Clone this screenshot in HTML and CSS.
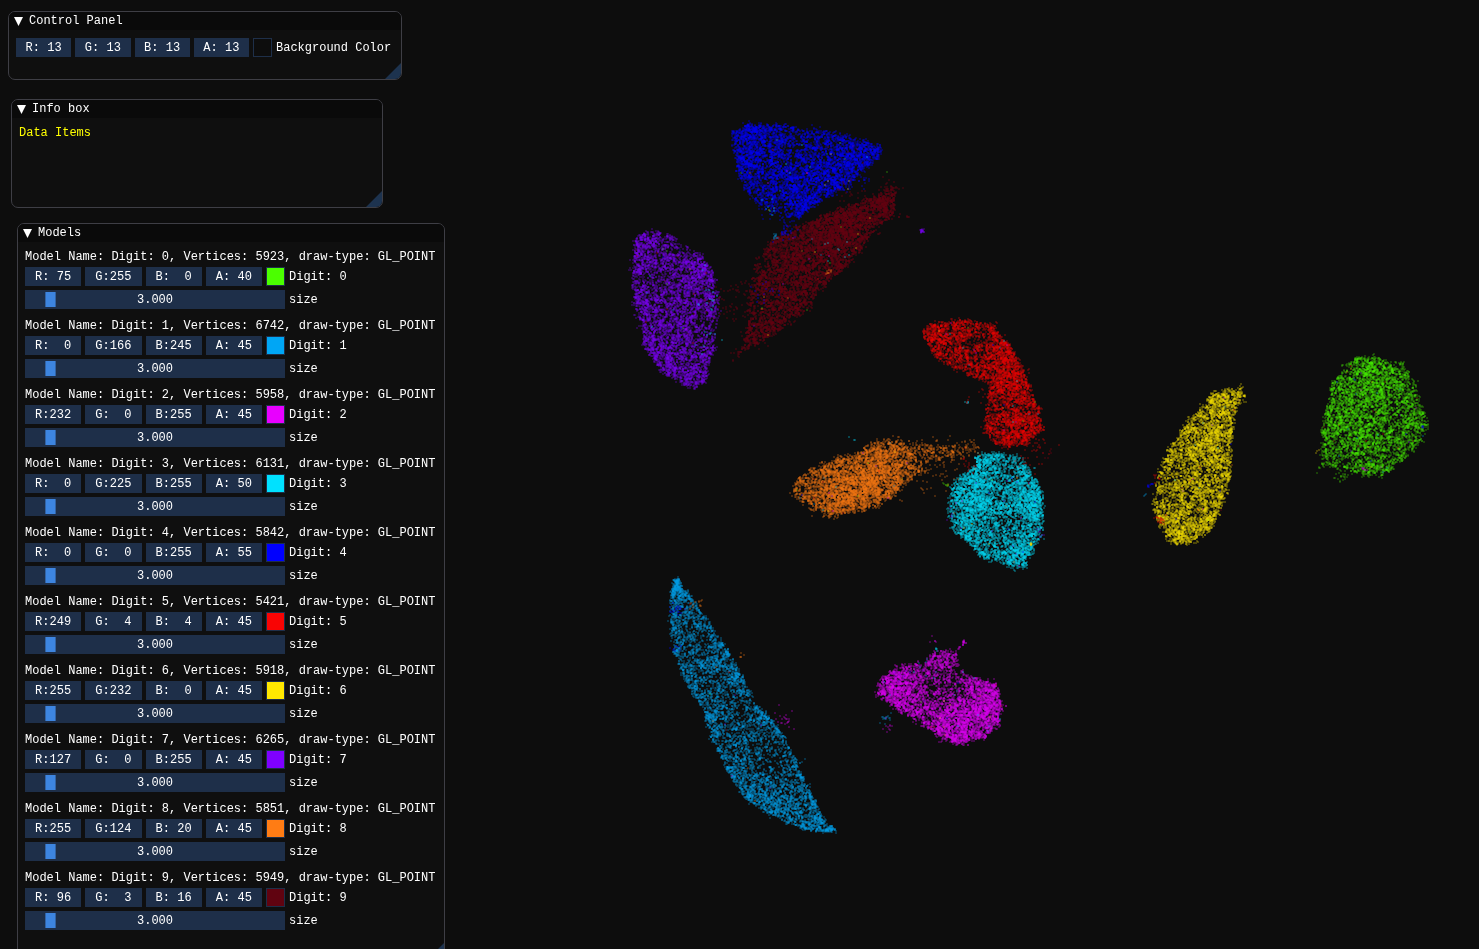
FILE: index.html
```html
<!DOCTYPE html>
<html lang="en">
<head>
<meta charset="utf-8">
<title>Digit point clouds</title>
<link rel="stylesheet" href="styles.css">
</head>
<body>
<main class="desktop">
  <canvas class="scene" aria-label="Point clouds of ten digit classes"></canvas>

  <section class="window window-control">
    <header class="titlebar">
      <button class="collapse" aria-label="Collapse Control Panel"><svg viewBox="0 0 9 9"><path d="M0 0H9L4.5 9Z"/></svg></button>
      <h2 class="title">Control Panel</h2>
    </header>
    <div class="content">
      <div class="row">
        <div class="channels">
          <input class="field" aria-label="Red" value="R: 13">
          <input class="field" aria-label="Green" value="G: 13">
          <input class="field" aria-label="Blue" value="B: 13">
          <input class="field" aria-label="Alpha" value="A: 13">
          <input class="swatch" type="color" id="background" value="#0d0d0d">
        </div>
        <label class="label" for="background">Background Color</label>
      </div>
    </div>
    <span class="grip"></span>
  </section>

  <section class="window window-info">
    <header class="titlebar">
      <button class="collapse" aria-label="Collapse Info box"><svg viewBox="0 0 9 9"><path d="M0 0H9L4.5 9Z"/></svg></button>
      <h2 class="title">Info box</h2>
    </header>
    <div class="content">
      <p class="line accent">Data Items</p>
    </div>
    <span class="grip"></span>
  </section>

  <section class="window window-models">
    <header class="titlebar">
      <button class="collapse" aria-label="Collapse Models"><svg viewBox="0 0 9 9"><path d="M0 0H9L4.5 9Z"/></svg></button>
      <h2 class="title">Models</h2>
    </header>
    <div class="content models"></div>
    <span class="grip"></span>
  </section>
</main>
<script src="app.js"></script>
</body>
</html>
```
FILE: styles.css
```css
:root {
  --bg: #0d0d0d;
  --window: #0f0f0f;
  --title: #0a0a0a;
  --border: #3e3e45;
  --frame: #1e2f49;
  --grab: #3d85e0;
  --gap: 4px;
}

* {
  box-sizing: border-box;
}

body {
  margin: 0;
  background: var(--bg);
  color: #fff;
  font: 12px/15px "Liberation Mono", "DejaVu Sans Mono", monospace;
}

.desktop {
  position: relative;
  height: 100vh;
  overflow: hidden;
}

.scene {
  display: block;
}

.window {
  position: absolute;
  border: 1px solid var(--border);
  border-radius: 7px;
  background: var(--window);
  overflow: hidden;
}

.window-control {
  left: 8px;
  top: 11px;
  width: 394px;
  min-height: 69px;
  --item-width: 256px;
}

.window-info {
  left: 11px;
  top: 99px;
  width: 372px;
  min-height: 109px;
}

.window-models {
  left: 17px;
  top: 223px;
  width: 428px;
  min-height: 737px;
  --item-width: 260px;
}

.titlebar {
  display: flex;
  align-items: center;
  gap: 6px;
  height: 18px;
  padding: 0 5px;
  background: var(--title);
}

.collapse {
  display: flex;
  padding: 0;
  border: 0;
  background: none;
}

.collapse svg {
  width: 9px;
  height: 9px;
  fill: #fff;
}

.title {
  margin: 0;
  padding-top: 1px;
  font: inherit;
}

.content {
  padding: 8px 7px;
}

.line {
  margin: 0;
  white-space: nowrap;
}

.accent {
  color: #ff0;
}

.models {
  display: grid;
  gap: 10px;
}

.model {
  display: grid;
  gap: var(--gap);
}

.model .line {
  height: 13px;
}

.row {
  display: flex;
  align-items: center;
  gap: var(--gap);
  white-space: nowrap;
}

.label,
.value {
  padding-top: 2px;
}

.channels {
  display: grid;
  grid-template-columns: repeat(4, 1fr) 19px;
  gap: var(--gap);
  width: var(--item-width);
}

.field {
  width: 100%;
  min-width: 0;
  height: 19px;
  padding: 1px 0 0;
  border: 0;
  background: var(--frame);
  color: inherit;
  font: inherit;
  text-align: center;
}

.swatch {
  appearance: none;
  width: 19px;
  height: 19px;
  padding: 0;
  border: 1px solid var(--frame);
  background: none;
}

.swatch::-webkit-color-swatch-wrapper {
  padding: 0;
}

.swatch::-webkit-color-swatch {
  border: 0;
  border-radius: 0;
}

.slider {
  display: grid;
  width: var(--item-width);
  height: 19px;
}

.slider > * {
  grid-area: 1 / 1;
}

.range {
  appearance: none;
  width: 100%;
  height: 19px;
  margin: 0;
  padding: 0 2px;
  background: var(--frame);
}

.range::-webkit-slider-thumb {
  appearance: none;
  width: 11px;
  height: 15px;
  border: 1px solid #3263a4;
  border-width: 0 1px;
  background: var(--grab);
}

.value {
  place-self: center;
  z-index: 1;
  pointer-events: none;
}

.grip {
  position: absolute;
  right: 0;
  bottom: 0;
  width: 16px;
  height: 16px;
  background: #1d334f;
  clip-path: polygon(100% 0, 100% 100%, 0 100%);
}
```
FILE: app.js
```js
const models = [
  { vertices: 5923, rgba: [75, 255, 0, 40], rough: 0.8, rim: 0.04,
    outline: [1357,357,1380,358,1403,365,1415,380,1418,397,1427,420,1423,440,1403,460,1387,472,1367,477,1350,470,1322,465,1322,427,1330,400,1332,383,1343,370],
    dense: [[1368,370,18],[1385,388,14],[1342,415,20]], sparse: [[1342,464,10]] },
  { vertices: 6742, rgba: [0, 166, 245, 45], rough: 0.5, rim: 0.16,
    outline: [677,577,682,590,692,598,703,614,720,640,734,663,746,685,757,706,772,722,785,738,795,760,803,780,815,802,827,826,837,831,813,831,793,825,754,805,742,793,732,778,720,755,711,733,702,706,689,687,681,668,674,648,670,620,671,597],
    dense: [[677,587,8],[735,675,10],[775,800,20],[762,715,10],[818,824,12]], sparse: [[698,640,14],[742,715,16],[765,750,18],[776,768,14]] },
  { vertices: 5958, rgba: [232, 0, 255, 45], rough: 1, rim: 0,
    outline: [877,693,880,680,898,667,927,663,933,653,953,650,962,670,983,680,997,685,1002,707,998,723,987,737,967,742,948,743,927,728,907,715,890,705],
    dense: [[895,690,18],[985,705,20],[958,725,20],[937,662,7]], sparse: [[940,685,22],[960,670,12]] },
  { vertices: 6131, rgba: [0, 225, 255, 50], rough: 1, rim: 0.05,
    outline: [977,455,997,453,1020,457,1030,470,1040,487,1043,510,1040,540,1027,557,1025,570,1010,565,983,557,970,543,953,530,948,503,957,480,973,470],
    dense: [[988,468,14],[1032,500,18],[980,500,18],[1020,555,12]], sparse: [[1007,470,14],[1004,525,14]] },
  { vertices: 5842, rgba: [0, 0, 255, 55], rough: 1, rim: 0.06,
    outline: [731,135,745,125,787,125,800,131,813,129,847,136,870,144,881,149,877,158,860,173,848,188,830,194,805,211,784,228,780,218,763,206,748,192,737,170,735,147],
    dense: [[760,135,18],[870,152,13],[842,175,16],[803,203,16],[745,165,12]], sparse: [[800,138,14],[775,208,18],[858,183,12],[785,222,14]] },
  { vertices: 5421, rgba: [249, 4, 4, 45], rough: 1, rim: 0.04,
    outline: [922,330,940,323,967,320,993,325,1010,347,1024,370,1030,390,1041,410,1040,430,1027,443,1007,448,993,443,983,427,987,407,989,382,960,370,937,357,927,340],
    dense: [[1003,350,16],[1012,380,16],[1018,435,16],[932,334,8]], sparse: [[980,345,14],[992,408,10]] },
  { vertices: 5918, rgba: [255, 232, 0, 45], rough: 0.8, rim: 0.04,
    outline: [1230,390,1242,387,1240,398,1237,407,1233,427,1230,450,1231,473,1223,500,1218,517,1207,533,1190,544,1172,543,1162,530,1153,507,1155,487,1165,457,1183,427,1203,407,1213,393],
    dense: [[1218,403,16],[1180,530,12],[1211,520,10],[1212,445,12]], sparse: [[1178,470,10],[1168,500,10]] },
  { vertices: 6265, rgba: [127, 0, 255, 45], rough: 1, rim: 0.05,
    outline: [634,243,642,233,653,230,670,235,683,245,703,260,712,270,718,293,715,327,715,347,707,367,707,382,690,388,663,373,647,350,638,320,634,277],
    dense: [[642,241,8],[700,268,14],[664,360,16],[640,300,10]], sparse: [[676,245,12],[655,285,12],[708,330,12]] },
  { vertices: 5851, rgba: [255, 124, 20, 45], rough: 1.7, rim: 0,
    outline: [792,493,797,480,817,467,853,455,870,445,890,440,913,445,923,443,953,450,980,447,953,457,927,464,910,480,887,500,857,511,830,516,810,508],
    dense: [[840,495,24],[885,465,20],[870,490,20]], sparse: [[800,484,10],[925,458,18],[965,450,18]] },
  { vertices: 5949, rgba: [104, 3, 18, 70], rough: 1.4, rim: 0,
    outline: [887,182,895,197,893,213,867,240,850,263,827,283,807,310,780,330,753,347,740,355,748,323,748,303,757,267,770,240,797,227,833,213,867,200,883,193],
    dense: [[885,205,14],[825,235,20],[850,225,18]], sparse: [[752,305,18],[762,265,12],[745,345,14]] },
];

// Opacity as entered in the panel, where it differs from the blend strength above.
const panelAlpha = { 9: 45 };

// Scattered samples of a class outside its own cloud: [x, y, class, count, spread]
const strays = [
  [922,231,7,24,1.2], [909,217,9,4,1], [887,172,0,1,0], [775,237,1,12,2], [768,205,3,8,5],
  [888,190,9,28,7], [735,300,9,60,14], [765,295,4,16,9], [785,232,4,30,7], [850,196,9,18,8],
  [768,205,4,30,8], [862,180,4,16,6],
  [710,300,3,14,8], [712,340,3,7,7], [829,272,8,10,3], [838,258,3,8,8], [755,340,9,25,8],
  [967,402,3,5,2], [968,400,5,4,2], [1035,445,5,28,11], [1030,465,5,14,10], [985,395,5,8,5],
  [946,485,0,8,2], [935,475,8,45,13], [967,462,5,14,8], [960,490,3,14,7], [1040,532,7,7,3],
  [955,449,8,40,6], [972,447,8,24,5],
  [950,514,7,5,3], [1031,544,6,12,0.6], [1240,401,6,16,4], [1244,396,6,10,0.8],
  [1151,485,4,10,2], [1157,478,5,8,3], [1160,520,5,22,4], [1146,495,1,3,2], [1340,474,0,24,5],
  [1319,451,6,3,2], [1423,427,4,5,1], [1364,470,2,8,2], [1320,468,0,6,3],
  [786,719,2,22,6], [800,762,1,7,3], [885,718,1,16,4], [889,725,2,10,4], [934,640,2,5,3],
  [964,643,2,18,1.5], [959,648,2,6,1], [937,650,3,5,1], [900,675,7,9,4], [927,664,1,6,7],
  [677,588,1,60,3], [675,610,4,20,4], [698,604,8,12,4], [740,655,8,5,4], [677,648,4,8,3],
  [832,829,1,16,2], [850,440,3,3,3], [1050,455,9,6,5], [737,355,9,10,4],
];

function buildModels() {
  const list = document.querySelector(".models");
  list.innerHTML = models.map((model, i) => {
    const [r, g, b, a] = i === 9 ? [96, 3, 16, panelAlpha[9]] : model.rgba;
    const fields = [r, g, b, a].map((value, c) =>
      `<input class="field" aria-label="Digit ${i} ${"RGBA"[c]}" value="${"RGBA"[c]}:${String(value).padStart(3)}">`).join("");
    const hex = "#" + [r, g, b].map(v => v.toString(16).padStart(2, "0")).join("");
    return `<div class="model">
      <p class="line">Model Name: Digit: ${i}, Vertices: ${model.vertices}, draw-type: GL_POINT</p>
      <div class="row">
        <div class="channels">${fields}<input class="swatch" type="color" id="color${i}" value="${hex}"></div>
        <label class="label" for="color${i}">Digit: ${i}</label>
      </div>
      <div class="row">
        <div class="slider">
          <input class="range" type="range" id="size${i}" min="1" max="28" step="0.001" value="3">
          <output class="value" for="size${i}">3.000</output>
        </div>
        <label class="label" for="size${i}">size</label>
      </div>
    </div>`;
  }).join("");
}

let seed = 20177;
function random() {
  seed = (seed + 0x6d2b79f5) | 0;
  let t = Math.imul(seed ^ (seed >>> 15), 1 | seed);
  t = (t + Math.imul(t ^ (t >>> 7), 61 | t)) ^ t;
  return ((t ^ (t >>> 14)) >>> 0) / 4294967296;
}

function gauss() {
  return (random() + random() + random() + random() - 2) * 1.7;
}

function inside(poly, x, y) {
  let hit = false;
  for (let i = 0, j = poly.length - 2; i < poly.length; j = i, i += 2) {
    const xi = poly[i], yi = poly[i + 1], xj = poly[j], yj = poly[j + 1];
    if ((yi > y) !== (yj > y) && x < (xj - xi) * (y - yi) / (yj - yi) + xi) hit = !hit;
  }
  return hit;
}

function drawScene() {
  seed = 20177;
  const canvas = document.querySelector(".scene");
  canvas.width = window.innerWidth;
  canvas.height = window.innerHeight;
  const ctx = canvas.getContext("2d");

  const point = (x, y, rgba, gain) => {
    const [r, g, b] = rgba.map(v => Math.round(v * 0.94));
    ctx.fillStyle = `rgba(${r},${g},${b},${gain * rgba[3] / 255})`;
    ctx.fillRect(Math.round(x), Math.round(y), 2, 2);
  };

  models.forEach((model, index) => {
    const poly = model.outline;
    const xs = poly.filter((_, i) => i % 2 === 0), ys = poly.filter((_, i) => i % 2);
    const x0 = Math.min(...xs), x1 = Math.max(...xs), y0 = Math.min(...ys), y1 = Math.max(...ys);
    for (let n = 0; n < model.vertices;) {
      let x = x0 + random() * (x1 - x0), y = y0 + random() * (y1 - y0);
      if (random() < model.rim * 0.5) {
        const i = Math.floor(random() * xs.length), j = (i + 1) % xs.length, t = random();
        x = xs[i] + (xs[j] - xs[i]) * t + gauss() * 1.5;
        y = ys[i] + (ys[j] - ys[i]) * t + gauss() * 1.5;
      }
      if (!inside(poly, x, y)) continue;
      let weight = 0.5;
      for (const [cx, cy, r] of model.dense) weight += 0.35 * Math.exp(-((x - cx) ** 2 + (y - cy) ** 2) / (r * r));
      for (const [cx, cy, r] of model.sparse) weight *= 1 - 0.6 * Math.exp(-((x - cx) ** 2 + (y - cy) ** 2) / (r * r));
      if (random() > weight) continue;

      // Samples arrive in small clumps around a seed that may sit slightly outside the outline.
      const reach = model.rough * (random() < 0.15 ? 2.4 : 1);
      const sx = x - 1 + gauss() * reach, sy = y - 1 + gauss() * reach;
      const clump = 1 + Math.floor(random() * random() * 5);
      for (let k = 0; k < clump; k++, n++) {
        point(sx + gauss() * 1.1, sy + gauss() * 1.1, model.rgba, 1.55);
      }
    }
    for (let n = 0; n < 50; n++) {
      const x = x0 + random() * (x1 - x0), y = y0 + random() * (y1 - y0);
      if (inside(poly, x, y)) point(x, y, models[(index + 1 + Math.floor(random() * 9)) % 10].rgba, 1.5);
    }
  });

  for (const [x, y, index, count, spread] of strays) {
    for (let n = 0; n < count; n++) {
      point(x - 1 + gauss() * spread * 0.8, y - 1 + gauss() * spread * 0.8, models[index].rgba, 1.5);
    }
  }
}

buildModels();
drawScene();
window.addEventListener("resize", drawScene);
```
